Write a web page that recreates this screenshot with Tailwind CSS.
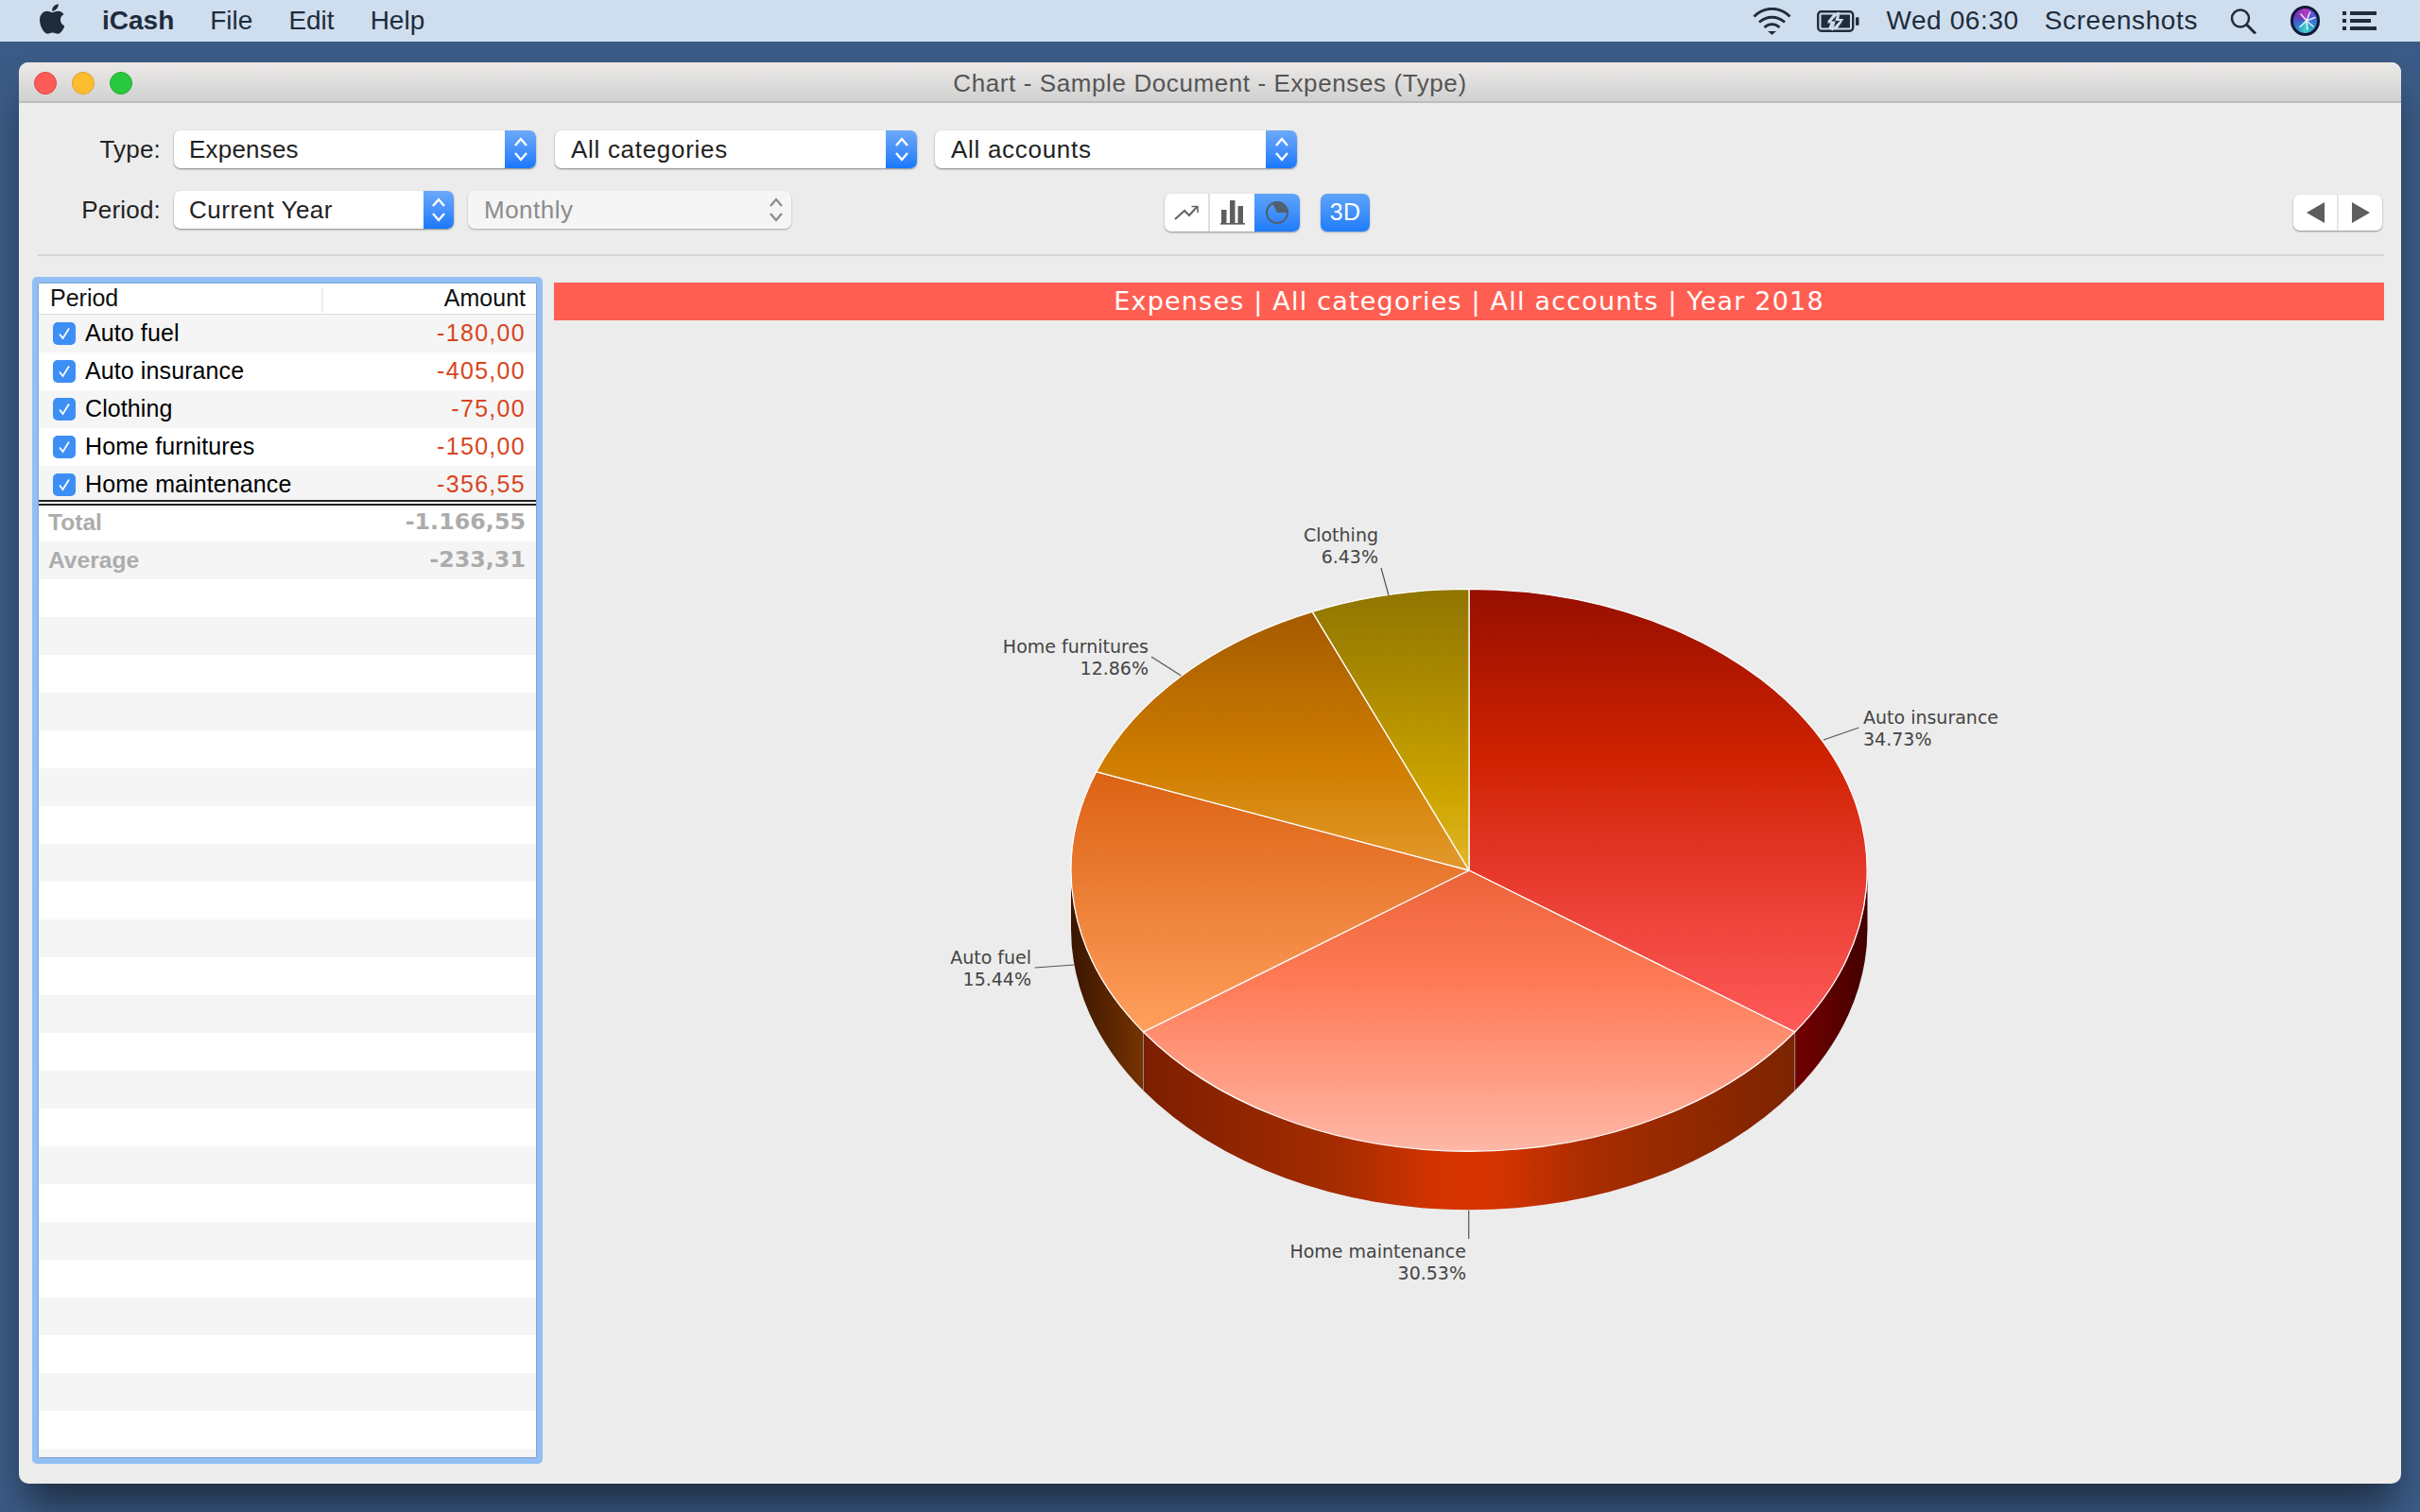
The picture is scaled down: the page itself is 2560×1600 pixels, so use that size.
<!DOCTYPE html>
<html lang="en">
  <head>
    <meta charset="UTF-8" />
    <title>Chart - Sample Document - Expenses (Type)</title>
    <script src="https://cdn.jsdelivr.net/npm/@tailwindcss/browser@4"></script>
  </head>
  <body class="w-[2560px] h-[1600px] overflow-hidden flex flex-col bg-[#3b5b86] font-['Liberation_Sans',sans-serif]">
    <!-- MENU BAR -->
    <header class="h-[44px] shrink-0 flex items-center bg-[#cfdeee] text-[#1e2c3c] text-[28px] pl-[42px] pr-[46px]">
      <svg class="w-[26px] h-[32px] mb-[4px]" viewBox="4 30 372 452" preserveAspectRatio="none" fill="#1e2c3c">
        <path d="M318.7 268.7c-.2-36.7 16.4-64.4 50-84.8-18.8-26.9-47.2-41.7-84.7-44.6-35.5-2.8-74.3 20.7-88.5 20.7-15 0-49.4-19.7-76.4-19.7C63.3 141.2 4 184.8 4 273.5q0 39.3 14.4 81.2c12.8 36.7 59 126.7 107.2 125.2 25.2-.6 43-17.9 75.8-17.9 31.8 0 48.3 17.9 76.4 17.9 48.6-.7 90.4-82.5 102.6-119.3-65.2-30.7-61.7-90-61.7-91.9zm-56.6-164.2c27.3-32.4 24.8-61.9 24-72.5-24.1 1.4-52 16.4-67.9 34.9-17.5 19.8-27.8 44.3-25.6 71.9 26.1 2 49.9-11.4 69.5-34.3z"/>
      </svg>
      <nav class="ml-[40px] flex gap-[38px]">
        <span class="font-bold">iCash</span>
        <span>File</span>
        <span>Edit</span>
        <span>Help</span>
      </nav>
      <div class="ml-auto flex items-center tracking-[0.6px]">
        <svg class="w-[41px] h-[29px]" viewBox="0 0 41 29" fill="none" stroke="#1e2c3c" stroke-width="2.800">
          <path d="M1.500 9.500C12 -1.500 29 -1.500 39.500 9.500"/>
          <path d="M7 15.500C15 8.500 26 8.500 34 15.500"/>
          <path d="M12.500 21C17 16.500 24 16.500 28.500 21"/>
          <path d="M16 25h9l-4.500 4z" fill="#1e2c3c" stroke="none"/>
        </svg>
        <svg class="ml-[27px] w-[46px] h-[23px]" viewBox="0 0 46 23" fill="none">
          <rect x="1.200" y="1.200" width="37" height="20.600" rx="3.500" stroke="#1e2c3c" stroke-width="2.400"/>
          <path d="M4.500 4.500H17L11 12H15L12.500 18.500H4.500z" fill="#1e2c3c"/>
          <path d="M24 4.500H35V18.500H22L27 11.500H23z" fill="#1e2c3c"/>
          <path d="M23 2L13 12.500H18.500L16 21L26.500 10H20.500z" fill="#1e2c3c" stroke="#cfdeee" stroke-width="1.800"/>
          <rect x="41" y="7" width="3.500" height="9" rx="1.500" fill="#1e2c3c"/>
        </svg>
        <span class="ml-[27px]">Wed 06:30</span>
        <span class="ml-[27px]">Screenshots</span>
        <svg class="ml-[34px] w-[28px] h-[27px] mt-[1px]" viewBox="0 0 28 27" fill="none" stroke="#1e2c3c" stroke-width="2.500">
          <circle cx="11" cy="10.500" r="9"/>
          <path d="M17.500 17L27 26.500" stroke-width="3"/>
        </svg>
        <span class="relative ml-[36px] w-[31px] h-[32px] rounded-full border-[3px] border-[#10183a] bg-[conic-gradient(#b838c0,#4a5ad8,#2a8ccc,#40d0c8,#2a78d0,#6a38b8,#b838c0)]">
          <svg class="absolute left-[-3px] top-[-3px] w-[31px] h-[32px]" viewBox="0 0 31 32" fill="none" stroke="white" stroke-linecap="round">
            <path d="M17 16L20.500 7M17 16L26 12.500M17 16L24 22M17 16L18 25M17 16L10 22.500M17 16L11 9" stroke-width="1.600" stroke-opacity="0.85"/>
          </svg>
        </span>
        <svg class="ml-[24px] w-[36px] h-[20px]" viewBox="0 0 36 20" fill="#1e2c3c">
          <rect x="0" y="0" width="4" height="4"/>
          <rect x="8" y="0" width="28" height="4"/>
          <rect x="0" y="8" width="4" height="4"/>
          <rect x="8" y="8" width="22" height="4"/>
          <rect x="0" y="16" width="4" height="4"/>
          <rect x="8" y="16" width="28" height="4"/>
        </svg>
      </div>
    </header>

    <!-- WINDOW -->
    <main class="mx-[20px] mt-[22px] h-[1504px] rounded-[10px] bg-[#ececec] flex flex-col shadow-[0_30px_40px_-8px_rgba(0,0,0,0.5)]">
      <div class="relative h-[43px] shrink-0 flex items-center justify-center pt-[3px] rounded-t-[10px] border-b-2 border-[#bdbdbd] bg-gradient-to-b from-[#eceae8] to-[#d1d1d1] text-[26px] tracking-[0.6px] text-[#555555]">
        <div class="absolute left-[16px] top-[10px] flex gap-[16px]">
          <span class="w-[24px] h-[24px] rounded-full bg-[#fc5b57] border border-[#e2463f]"></span>
          <span class="w-[24px] h-[24px] rounded-full bg-[#fdbc2e] border border-[#e0a028]"></span>
          <span class="w-[24px] h-[24px] rounded-full bg-[#28c83f] border border-[#1dad2b]"></span>
        </div>
        Chart - Sample Document - Expenses (Type)
      </div>

      <!-- TOOLBAR -->
      <section class="pt-[29px] text-[26px] tracking-[0.2px] text-[#222222]">
        <div class="flex items-center h-[40px]">
          <span class="w-[150px] text-right">Type:</span>
          <div class="ml-[14px] w-[383px] h-[40px] rounded-[7px] bg-white shadow-[0_1px_2px_rgba(0,0,0,0.45)] flex items-center justify-between pl-[16px]">
            Expenses
            <span class="w-[33px] h-[40px] rounded-r-[7px] bg-gradient-to-b from-[#6ca9fa] to-[#1778fb] flex items-center justify-center">
              <svg class="w-[16px] h-[30px]" viewBox="0 0 16 30" fill="none" stroke="white" stroke-width="2.400"><path d="M2 11L8 4l6 7M2 19l6 7 6-7"/></svg>
            </span>
          </div>
          <div class="ml-[20px] w-[383px] h-[40px] rounded-[7px] bg-white shadow-[0_1px_2px_rgba(0,0,0,0.45)] flex items-center justify-between pl-[17px] tracking-[0.7px]">
            All categories
            <span class="w-[33px] h-[40px] rounded-r-[7px] bg-gradient-to-b from-[#6ca9fa] to-[#1778fb] flex items-center justify-center">
              <svg class="w-[16px] h-[30px]" viewBox="0 0 16 30" fill="none" stroke="white" stroke-width="2.400"><path d="M2 11L8 4l6 7M2 19l6 7 6-7"/></svg>
            </span>
          </div>
          <div class="ml-[19px] w-[383px] h-[40px] rounded-[7px] bg-white shadow-[0_1px_2px_rgba(0,0,0,0.45)] flex items-center justify-between pl-[17px] tracking-[0.7px]">
            All accounts
            <span class="w-[33px] h-[40px] rounded-r-[7px] bg-gradient-to-b from-[#6ca9fa] to-[#1778fb] flex items-center justify-center">
              <svg class="w-[16px] h-[30px]" viewBox="0 0 16 30" fill="none" stroke="white" stroke-width="2.400"><path d="M2 11L8 4l6 7M2 19l6 7 6-7"/></svg>
            </span>
          </div>
        </div>

        <div class="flex items-start mt-[24px] h-[43px]">
          <span class="w-[150px] h-[40px] leading-[40px] text-right">Period:</span>
          <div class="ml-[14px] w-[296px] h-[40px] rounded-[7px] bg-white shadow-[0_1px_2px_rgba(0,0,0,0.45)] flex items-center justify-between pl-[16px] tracking-[0.5px]">
            Current Year
            <span class="w-[32px] h-[40px] rounded-r-[7px] bg-gradient-to-b from-[#6ca9fa] to-[#1778fb] flex items-center justify-center">
              <svg class="w-[16px] h-[30px]" viewBox="0 0 16 30" fill="none" stroke="white" stroke-width="2.400"><path d="M2 11L8 4l6 7M2 19l6 7 6-7"/></svg>
            </span>
          </div>
          <div class="ml-[15px] w-[342px] h-[40px] rounded-[7px] bg-[#f5f5f5] shadow-[0_1px_2px_rgba(0,0,0,0.3)] flex items-center justify-between pl-[17px] text-[#8b8b8b] tracking-[0.5px]">
            Monthly
            <span class="w-[32px] h-[40px] flex items-center justify-center">
              <svg class="w-[16px] h-[30px]" viewBox="0 0 16 30" fill="none" stroke="#8e8e8e" stroke-width="2.400"><path d="M2 11L8 4l6 7M2 19l6 7 6-7"/></svg>
            </span>
          </div>

          <!-- chart type -->
          <div class="ml-[395px] mt-[3px] w-[143px] h-[40px] rounded-[7px] bg-white shadow-[0_1px_2px_rgba(0,0,0,0.4)] flex overflow-hidden">
            <span class="w-[48px] flex items-center justify-center border-r-2 border-[#dedede]">
              <svg class="w-[26px] h-[16px]" viewBox="0 0 26 16" fill="none" stroke="#666666" stroke-width="2.200"><path d="M1 15L11 6l5 5 8-9"/><path d="M18.500 1.500h6.500v6.500" stroke-width="1.600"/></svg>
            </span>
            <span class="w-[47px] flex items-center justify-center">
              <svg class="w-[26px] h-[26px]" viewBox="0 0 26 26" fill="#5e5e5e"><rect x="1" y="10" width="5.500" height="14"/><rect x="10" y="0" width="5.500" height="24"/><rect x="18.500" y="6" width="5.500" height="18"/><rect x="0" y="24" width="26" height="1.600"/></svg>
            </span>
            <span class="w-[48px] flex items-center justify-center bg-gradient-to-b from-[#5ea3fb] to-[#1d7cfa]">
              <svg class="w-[24px] h-[24px]" viewBox="0 0 24 24"><circle cx="12" cy="12" r="11" fill="none" stroke="#50606f" stroke-width="2"/><path d="M12 12L6.500 1.500A11 11 0 0 1 23 12z" fill="#50606f"/></svg>
            </span>
          </div>
          <div class="ml-[22px] mt-[3px] w-[52px] h-[40px] rounded-[7px] bg-gradient-to-b from-[#5ea3fb] to-[#1d7cfa] shadow-[0_1px_2px_rgba(0,0,0,0.3)] text-white text-[25px] flex items-center justify-center">3D</div>

          <!-- back / forward -->
          <div class="ml-[977px] mt-[4px] w-[94px] h-[38px] rounded-[7px] bg-white shadow-[0_1px_2px_rgba(0,0,0,0.4)] flex">
            <span class="w-[48px] flex items-center justify-center border-r-2 border-[#e6e6e6]">
              <svg class="w-[19px] h-[22px]" viewBox="0 0 19 22" fill="#5e5e5e"><path d="M19 0v22L0 11z"/></svg>
            </span>
            <span class="flex-1 flex items-center justify-center">
              <svg class="w-[19px] h-[22px]" viewBox="0 0 19 22" fill="#5e5e5e"><path d="M0 0v22l19-11z"/></svg>
            </span>
          </div>
        </div>
        <div class="mt-[24px] ml-[20px] mr-[18px] h-[2px] bg-[#d4d4d4]"></div>
      </section>

      <!-- CONTENT -->
      <section class="flex mt-[22px] ml-[14px]">
        <!-- TABLE -->
        <div class="w-[540px] h-[1256px] rounded-[5px] bg-[#92c0f5] p-[7px] text-[25px] text-black">
          <div class="h-full bg-white flex flex-col overflow-hidden shadow-[0_0_2px_rgba(0,0,0,0.4)]">
            <div class="relative h-[33px] shrink-0 flex items-center justify-between pl-[12px] pr-[11px] border-b border-[#dcdcdc] text-[#111111]">
              <span>Period</span>
              <span class="absolute left-[299px] top-[5px] h-[26px] w-[2px] bg-[#ececec]"></span>
              <span>Amount</span>
            </div>

            <div class="h-[40px] shrink-0 flex items-center justify-between pl-[15px] pr-[11px] bg-[#f5f5f5]">
              <span class="flex items-center gap-[10px] tracking-[0.1px]">
                <span class="w-[24px] h-[24px] rounded-[5px] bg-[#3d8ff5] flex items-center justify-center"><svg class="w-[14px] h-[14px]" viewBox="0 0 14 14" fill="none" stroke="white" stroke-width="1.800"><path d="M2 7.500L5.500 12 12 1.500"/></svg></span>
                Auto fuel
              </span>
              <span class="text-[#d9441c] tracking-[1.300px]">-180,00</span>
            </div>
            <div class="h-[40px] shrink-0 flex items-center justify-between pl-[15px] pr-[11px]">
              <span class="flex items-center gap-[10px] tracking-[0.1px]">
                <span class="w-[24px] h-[24px] rounded-[5px] bg-[#3d8ff5] flex items-center justify-center"><svg class="w-[14px] h-[14px]" viewBox="0 0 14 14" fill="none" stroke="white" stroke-width="1.800"><path d="M2 7.500L5.500 12 12 1.500"/></svg></span>
                Auto insurance
              </span>
              <span class="text-[#d9441c] tracking-[1.300px]">-405,00</span>
            </div>
            <div class="h-[40px] shrink-0 flex items-center justify-between pl-[15px] pr-[11px] bg-[#f5f5f5]">
              <span class="flex items-center gap-[10px] tracking-[0.1px]">
                <span class="w-[24px] h-[24px] rounded-[5px] bg-[#3d8ff5] flex items-center justify-center"><svg class="w-[14px] h-[14px]" viewBox="0 0 14 14" fill="none" stroke="white" stroke-width="1.800"><path d="M2 7.500L5.500 12 12 1.500"/></svg></span>
                Clothing
              </span>
              <span class="text-[#d9441c] tracking-[1.300px]">-75,00</span>
            </div>
            <div class="h-[40px] shrink-0 flex items-center justify-between pl-[15px] pr-[11px]">
              <span class="flex items-center gap-[10px] tracking-[0.1px]">
                <span class="w-[24px] h-[24px] rounded-[5px] bg-[#3d8ff5] flex items-center justify-center"><svg class="w-[14px] h-[14px]" viewBox="0 0 14 14" fill="none" stroke="white" stroke-width="1.800"><path d="M2 7.500L5.500 12 12 1.500"/></svg></span>
                Home furnitures
              </span>
              <span class="text-[#d9441c] tracking-[1.300px]">-150,00</span>
            </div>
            <div class="h-[36px] shrink-0 flex items-center justify-between pl-[15px] pr-[11px] pt-[4px] bg-[#f5f5f5]">
              <span class="flex items-center gap-[10px] tracking-[0.1px]">
                <span class="w-[24px] h-[24px] rounded-[5px] bg-[#3d8ff5] flex items-center justify-center"><svg class="w-[14px] h-[14px]" viewBox="0 0 14 14" fill="none" stroke="white" stroke-width="1.800"><path d="M2 7.500L5.500 12 12 1.500"/></svg></span>
                Home maintenance
              </span>
              <span class="text-[#d9441c] tracking-[1.300px]">-356,55</span>
            </div>
            <div class="h-[6px] shrink-0 border-y-2 border-[#222222]"></div>

            <div class="h-[38px] shrink-0 flex items-center justify-between pl-[10px] pr-[11px] pb-[2px] font-bold text-[#acacac]">
              <span class="text-[24.600px]">Total</span>
              <span class="text-[23.800px] font-['DejaVu_Sans',sans-serif]">-1.166,55</span>
            </div>
            <div class="h-[40px] shrink-0 flex items-center justify-between pl-[10px] pr-[11px] font-bold text-[#acacac] bg-[#f5f5f5]">
              <span class="text-[24.600px]">Average</span>
              <span class="text-[23.800px] font-['DejaVu_Sans',sans-serif]">-233,31</span>
            </div>
            <div class="flex-1 bg-[repeating-linear-gradient(to_bottom,#ffffff_0,#ffffff_40px,#f5f5f5_40px,#f5f5f5_80px)]"></div>
          </div>
        </div>

        <!-- CHART -->
        <div class="ml-[12px] mt-[6px] w-[1936px]">
          <div class="h-[40px] bg-[#ff5f52] flex items-center justify-center text-white text-[27px] tracking-[1.200px] font-['DejaVu_Sans',sans-serif]">Expenses | All categories | All accounts | Year 2018</div>
          <svg class="w-[1936px] h-[1210px]" viewBox="586 338 1936 1210">
            <defs>
              <linearGradient id="g-ins" gradientUnits="userSpaceOnUse" x1="0" y1="622" x2="0" y2="1091">
                <stop offset="0" stop-color="#960f00"/>
                <stop offset="0.38" stop-color="#cf2200"/>
                <stop offset="0.6" stop-color="#e33526"/>
                <stop offset="1" stop-color="#ff5b5b"/>
              </linearGradient>
              <linearGradient id="g-main" gradientUnits="userSpaceOnUse" x1="0" y1="920" x2="0" y2="1218">
                <stop offset="0" stop-color="#ec6339"/>
                <stop offset="0.4" stop-color="#ff7a56"/>
                <stop offset="1" stop-color="#ffb8a8"/>
              </linearGradient>
              <linearGradient id="g-fuel" gradientUnits="userSpaceOnUse" x1="0" y1="816" x2="0" y2="1091">
                <stop offset="0" stop-color="#dc6214"/>
                <stop offset="0.4" stop-color="#e97a30"/>
                <stop offset="1" stop-color="#ffa05e"/>
              </linearGradient>
              <linearGradient id="g-furn" gradientUnits="userSpaceOnUse" x1="0" y1="646" x2="0" y2="920">
                <stop offset="0" stop-color="#a45a00"/>
                <stop offset="0.6" stop-color="#d07e00"/>
                <stop offset="1" stop-color="#e39a2c"/>
              </linearGradient>
              <linearGradient id="g-clo" gradientUnits="userSpaceOnUse" x1="0" y1="622" x2="0" y2="920">
                <stop offset="0" stop-color="#8f7400"/>
                <stop offset="0.75" stop-color="#cfa600"/>
                <stop offset="1" stop-color="#e0b72c"/>
              </linearGradient>
              <linearGradient id="g-side-left" gradientUnits="userSpaceOnUse" x1="1133" y1="0" x2="1209" y2="0">
                <stop offset="0" stop-color="#3a1600"/>
                <stop offset="1" stop-color="#753300"/>
              </linearGradient>
              <linearGradient id="g-side-main" gradientUnits="userSpaceOnUse" x1="1209" y1="0" x2="1899" y2="0">
                <stop offset="0" stop-color="#7c1e00"/>
                <stop offset="0.3" stop-color="#a52c00"/>
                <stop offset="0.46" stop-color="#d63400"/>
                <stop offset="0.54" stop-color="#d63400"/>
                <stop offset="0.7" stop-color="#a52c00"/>
                <stop offset="1" stop-color="#7c2400"/>
              </linearGradient>
              <linearGradient id="g-side-right" gradientUnits="userSpaceOnUse" x1="1899" y1="0" x2="1975" y2="0">
                <stop offset="0" stop-color="#740000"/>
                <stop offset="1" stop-color="#440000"/>
              </linearGradient>
            </defs>

            <!-- sides -->
            <path d="M1133 920A421.500 297.700 0 0 0 1209.500 1091V1153A421.500 297.700 0 0 1 1133 982Z" fill="url(#g-side-left)"/>
            <path d="M1209.500 1091A421.500 297.700 0 0 0 1898.700 1091V1153A421.500 297.700 0 0 1 1209.500 1153Z" fill="url(#g-side-main)"/>
            <path d="M1898.700 1091A421.500 297.700 0 0 0 1975.500 920V982A421.500 297.700 0 0 1 1898.700 1153Z" fill="url(#g-side-right)"/>
            <path d="M1209.500 1091V1153M1898.700 1091V1153" stroke="#8c8c8c" stroke-width="1"/>

            <!-- slices -->
            <g stroke="white" stroke-width="1.300" stroke-linejoin="round">
              <path d="M1554 920V622.300A421.500 297.700 0 0 1 1898.700 1091Z" fill="url(#g-ins)"/>
              <path d="M1554 920L1898.700 1091A421.500 297.700 0 0 1 1209.500 1091Z" fill="url(#g-main)"/>
              <path d="M1554 920L1209.500 1091A421.500 297.700 0 0 1 1159.700 815.700Z" fill="url(#g-fuel)"/>
              <path d="M1554 920L1159.700 815.700A421.500 297.700 0 0 1 1388.300 646.300Z" fill="url(#g-furn)"/>
              <path d="M1554 920L1388.300 646.300A421.500 297.700 0 0 1 1554 622.300Z" fill="url(#g-clo)"/>
            </g>

            <!-- leaders -->
            <g stroke="#555555" stroke-width="1.200" fill="none">
              <path d="M1461 600L1469 629"/>
              <path d="M1218 694L1249.400 714"/>
              <path d="M1966.300 769L1929 782"/>
              <path d="M1094.700 1023L1136.700 1020"/>
              <path d="M1553.700 1280V1310"/>
            </g>

            <!-- labels -->
            <g class="font-['DejaVu_Sans',sans-serif] text-[19px]" fill="#444444">
              <text x="1458" y="571.500" text-anchor="end">Clothing</text>
              <text x="1458" y="594.500" text-anchor="end">6.43%</text>
              <text x="1215" y="689.500" text-anchor="end">Home furnitures</text>
              <text x="1215" y="712.500" text-anchor="end">12.86%</text>
              <text x="1971" y="764.500">Auto insurance</text>
              <text x="1971" y="787.500">34.73%</text>
              <text x="1091" y="1018.500" text-anchor="end">Auto fuel</text>
              <text x="1091" y="1041.500" text-anchor="end">15.44%</text>
              <text x="1551" y="1329.500" text-anchor="end">Home maintenance</text>
              <text x="1551" y="1352.500" text-anchor="end">30.53%</text>
            </g>
          </svg>
        </div>
      </section>
    </main>
  </body>
</html>
